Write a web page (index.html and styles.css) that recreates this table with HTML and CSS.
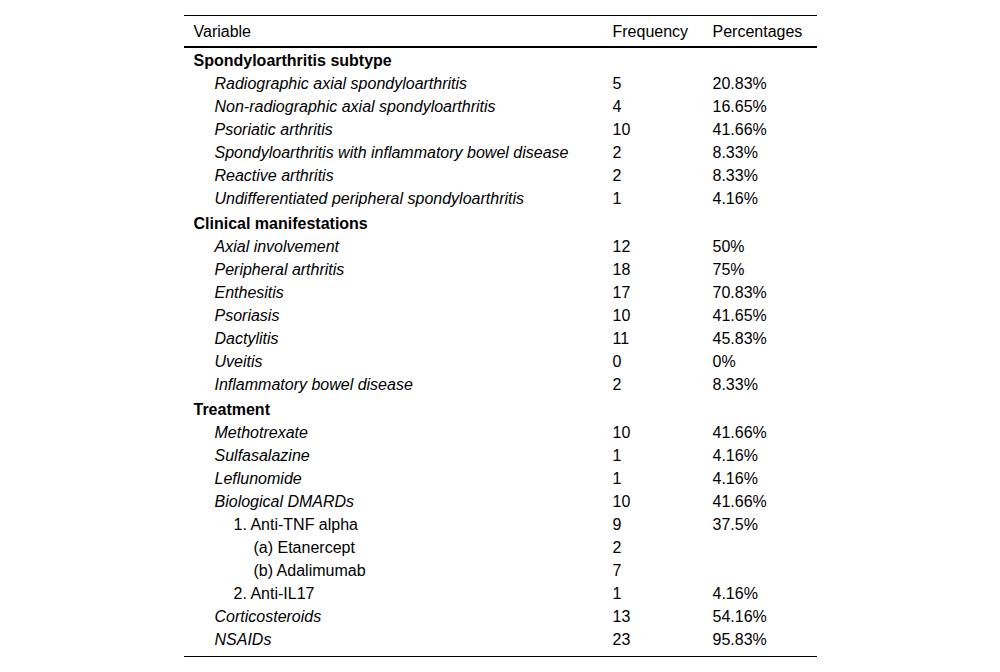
FILE: index.html
```html
<!DOCTYPE html>
<html>
<head>
<meta charset="utf-8">
<link rel="stylesheet" href="styles.css">
</head>
<body>
<table class="tbl">
  <colgroup>
    <col class="c1"><col class="c2"><col class="c3">
  </colgroup>
  <thead>
    <tr><th>Variable</th><th>Frequency</th><th>Percentages</th></tr>
  </thead>
  <tbody>
    <tr class="sec first"><td colspan="3">Spondyloarthritis subtype</td></tr>
    <tr><td class="l1">Radiographic axial spondyloarthritis</td><td>5</td><td>20.83%</td></tr>
    <tr><td class="l1">Non-radiographic axial spondyloarthritis</td><td>4</td><td>16.65%</td></tr>
    <tr><td class="l1">Psoriatic arthritis</td><td>10</td><td>41.66%</td></tr>
    <tr><td class="l1">Spondyloarthritis with inflammatory bowel disease</td><td>2</td><td>8.33%</td></tr>
    <tr><td class="l1">Reactive arthritis</td><td>2</td><td>8.33%</td></tr>
    <tr><td class="l1">Undifferentiated peripheral spondyloarthritis</td><td>1</td><td>4.16%</td></tr>
    <tr class="sec"><td colspan="3">Clinical manifestations</td></tr>
    <tr><td class="l1">Axial involvement</td><td>12</td><td>50%</td></tr>
    <tr><td class="l1">Peripheral arthritis</td><td>18</td><td>75%</td></tr>
    <tr><td class="l1">Enthesitis</td><td>17</td><td>70.83%</td></tr>
    <tr><td class="l1">Psoriasis</td><td>10</td><td>41.65%</td></tr>
    <tr><td class="l1">Dactylitis</td><td>11</td><td>45.83%</td></tr>
    <tr><td class="l1">Uveitis</td><td>0</td><td>0%</td></tr>
    <tr><td class="l1">Inflammatory bowel disease</td><td>2</td><td>8.33%</td></tr>
    <tr class="sec"><td colspan="3">Treatment</td></tr>
    <tr><td class="l1">Methotrexate</td><td>10</td><td>41.66%</td></tr>
    <tr><td class="l1">Sulfasalazine</td><td>1</td><td>4.16%</td></tr>
    <tr><td class="l1">Leflunomide</td><td>1</td><td>4.16%</td></tr>
    <tr><td class="l1">Biological DMARDs</td><td>10</td><td>41.66%</td></tr>
    <tr><td class="l2">1. Anti-TNF alpha</td><td>9</td><td>37.5%</td></tr>
    <tr><td class="l3">(a) Etanercept</td><td>2</td><td></td></tr>
    <tr><td class="l3">(b) Adalimumab</td><td>7</td><td></td></tr>
    <tr><td class="l2">2. Anti-IL17</td><td>1</td><td>4.16%</td></tr>
    <tr><td class="l1">Corticosteroids</td><td>13</td><td>54.16%</td></tr>
    <tr class="last"><td class="l1">NSAIDs</td><td>23</td><td>95.83%</td></tr>
  </tbody>
</table>
</body>
</html>
```
FILE: styles.css
```css
html, body {
  margin: 0;
  padding: 0;
  background: #fff;
}
body {
  font-family: "Liberation Sans", Arial, sans-serif;
  font-size: 16px;
  color: #000;
}
.tbl {
  border-collapse: collapse;
  width: 633px;
  margin: 15px auto 0;
  table-layout: fixed;
}
.c1 { width: 419px; }
.c2 { width: 100px; }
.c3 { width: 114px; }
.tbl th {
  font-weight: normal;
  text-align: left;
  padding: 7px 0 6px 10px;
  line-height: 17px;
  border-top: 1px solid #000;
  border-bottom: 2px solid #000;
}
.tbl td {
  padding: 4px 0 2px 10px;
  line-height: 17px;
  text-align: left;
  white-space: nowrap;
}
.sec td {
  font-weight: bold;
  padding-top: 6px;
}
.sec.first td {
  padding-top: 4px;
}
.tbl td.l1 {
  font-style: italic;
  padding-left: 31px;
}
.tbl td.l2 {
  padding-left: 50px;
}
.tbl td.l3 {
  padding-left: 70px;
}
.last td {
  padding-bottom: 8px;
  border-bottom: 1px solid #000;
}
```
